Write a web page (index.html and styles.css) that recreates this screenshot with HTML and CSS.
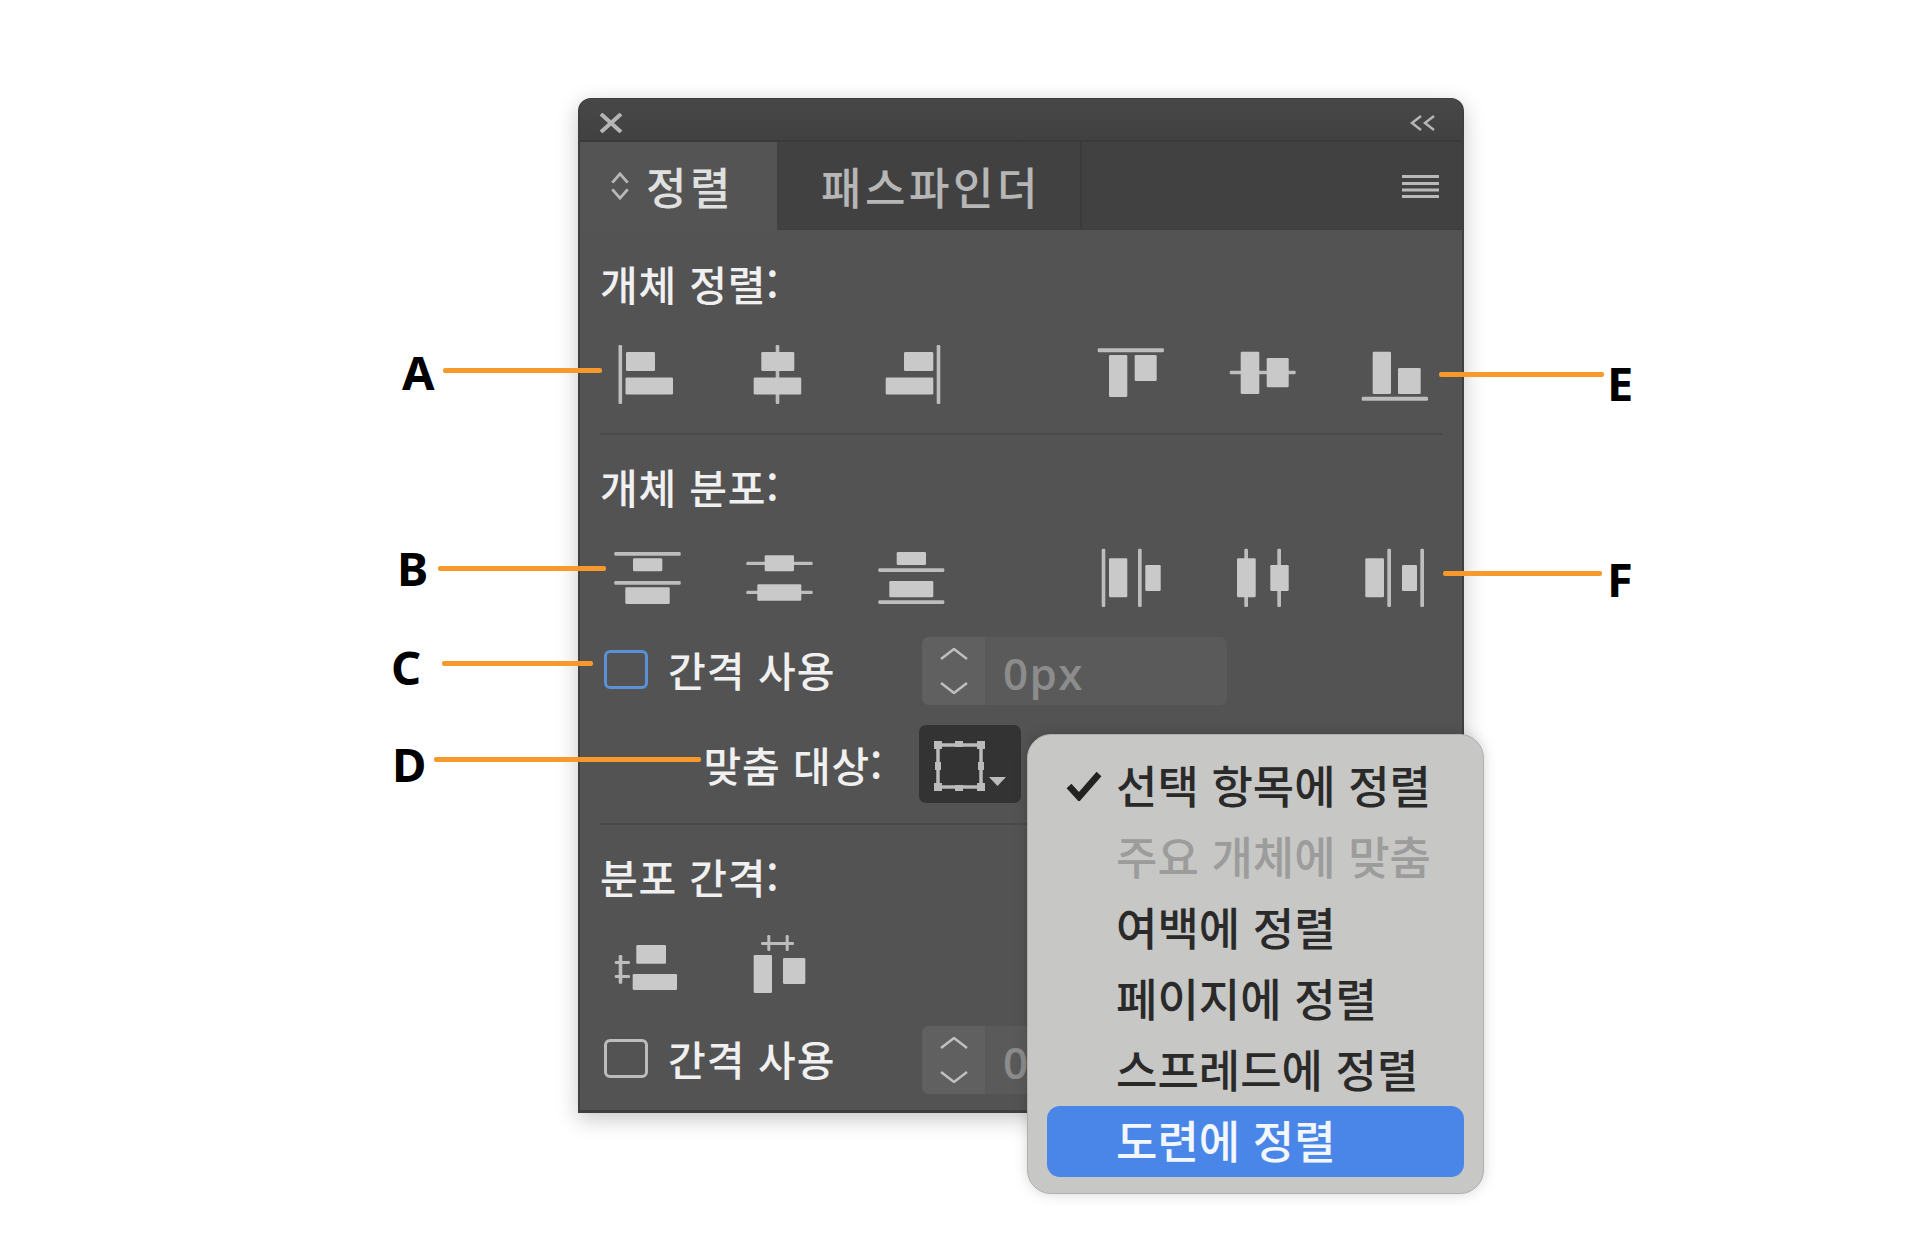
FILE: index.html
```html
<!DOCTYPE html>
<html lang="ko">
<head>
<meta charset="utf-8">
<title>정렬 패널</title>
<link rel="stylesheet" href="styles.css">
</head>
<body>
<div class="canvas">
  <section class="panel">
    <header class="titlebar">
      <svg class="ico-close" viewBox="0 0 24 20"><path d="M2 1 22 19M22 1 2 19"/></svg>
      <svg class="ico-collapse" viewBox="0 0 26 16"><path d="M11 1 2 8l9 7M24 1l-9 7 9 7"/></svg>
    </header>
    <nav class="tabs">
      <div class="tab active">
        <svg class="ico-updown" viewBox="0 0 20 26"><path d="M3 10 10 2l7 8M3 16l7 8 7-8"/></svg>
        <span>정렬</span>
      </div>
      <div class="tab second"><span>패스파인더</span></div>
      <svg class="ico-menu" viewBox="0 0 37 23"><path d="M0 1.5h37M0 8.5h37M0 15h37M0 21.5h37"/></svg>
    </nav>
    <div class="body">
      <h2 class="label first">개체 정렬:</h2>
      <div class="icons">
        <svg class="ic" viewBox="0 0 76 70"><rect class="b" x="8.5" y="6" width="3.6" height="59"/><rect x="16" y="13" width="29" height="19"/><rect x="15.5" y="38.5" width="47.5" height="17"/></svg>
        <svg class="ic" viewBox="0 0 76 70"><rect class="b" x="33.7" y="6" width="3.6" height="59"/><rect x="19.3" y="13" width="33" height="19"/><rect x="11.7" y="38.5" width="47.5" height="17"/></svg>
        <svg class="ic" viewBox="0 0 76 70"><rect class="b" x="62.7" y="6" width="3.6" height="59"/><rect x="30" y="13" width="29.3" height="19"/><rect x="11.7" y="38.5" width="47.6" height="17"/></svg>
        <svg class="ic group" viewBox="0 0 76 70"><rect class="b" x="1.7" y="9.3" width="66.3" height="4"/><rect x="13" y="16" width="18.3" height="42"/><rect x="38.7" y="16" width="22" height="26"/></svg>
        <svg class="ic" viewBox="0 0 76 70"><rect class="b" x="1.7" y="31.7" width="66" height="3.6"/><rect x="12.7" y="12.7" width="18.6" height="42.3"/><rect x="38.7" y="19" width="22" height="29.3"/></svg>
        <svg class="ic" viewBox="0 0 76 70"><rect x="12.7" y="12.7" width="18.3" height="42.3"/><rect x="38" y="29" width="22.7" height="26"/><rect class="b" x="1.7" y="57.7" width="66.3" height="4"/></svg>
      </div>
      <hr class="divider d1">
      <h2 class="label">개체 분포:</h2>
      <div class="icons r2">
        <svg class="ic" viewBox="0 0 76 70"><rect class="b" x="4.3" y="8" width="66.4" height="3.7"/><rect x="23" y="14.3" width="29.3" height="13"/><rect class="b" x="4.3" y="37" width="66.4" height="3.7"/><rect x="15.3" y="43.3" width="44.4" height="16.7"/></svg>
        <svg class="ic" viewBox="0 0 76 70"><rect class="b" x="4.3" y="17.7" width="66.4" height="3.4"/><rect x="22.7" y="11.3" width="29.3" height="16"/><rect class="b" x="4.3" y="46.7" width="66.4" height="3.4"/><rect x="15.3" y="40.3" width="44" height="16.4"/></svg>
        <svg class="ic" viewBox="0 0 76 70"><rect x="22.7" y="8" width="29.3" height="13"/><rect class="b" x="4.3" y="24.3" width="66" height="3.6"/><rect x="15.3" y="37" width="44" height="16.3"/><rect class="b" x="4.3" y="56.3" width="66" height="3.6"/></svg>
        <svg class="ic group" viewBox="0 0 76 70"><rect class="b" x="5.7" y="4.7" width="3.6" height="58.3"/><rect x="13" y="14.3" width="18.3" height="39"/><rect class="b" x="42" y="4.7" width="3.7" height="58.3"/><rect x="49.3" y="21" width="15.4" height="26"/></svg>
        <svg class="ic" viewBox="0 0 76 70"><rect class="b" x="16.3" y="4.7" width="3.7" height="58.3"/><rect x="9" y="14.3" width="18.7" height="39"/><rect class="b" x="49.3" y="4.7" width="3.7" height="58.3"/><rect x="42.3" y="21" width="18.4" height="26"/></svg>
        <svg class="ic" viewBox="0 0 76 70"><rect x="5.3" y="14.3" width="18.7" height="39"/><rect class="b" x="27.3" y="4.7" width="3.7" height="58.3"/><rect x="42" y="21" width="15" height="26"/><rect class="b" x="60.3" y="4.7" width="3.7" height="58.3"/></svg>
      </div>
      <div class="gap-row r-a">
        <span class="check blue"></span>
        <span class="gap-text">간격 사용</span>
        <div class="field">
          <span class="spin"><svg viewBox="0 0 28 46"><path d="M1 11 14 1l13 10M1 35l13 10 13-10"/></svg></span>
          <span class="value">0px</span>
        </div>
      </div>
      <div class="align-row">
        <span class="align-text">맞춤 대상:</span>
        <div class="select">
          <svg viewBox="0 0 102 78">
            <rect class="frame" x="19" y="20" width="43" height="42"/>
            <path class="handles" d="M15 16h8v8h-8zM58 16h8v8h-8zM15 58h8v8h-8zM58 58h8v8h-8zM36 16h8v6h-8zM36 60h8v6h-8zM16 37h6v8h-6zM59 37h6v8h-6z"/>
            <path class="handles" d="M70 52h17l-8.500 9z"/>
          </svg>
        </div>
      </div>
      <hr class="divider d2">
      <h2 class="label l3">분포 간격:</h2>
      <div class="icons r3">
        <svg class="ic" viewBox="0 0 76 70"><rect class="b" x="8.700" y="24" width="3.6" height="28.7"/><rect class="b" x="4.7" y="30" width="15.3" height="3"/><rect class="b" x="4.7" y="44" width="15.3" height="3"/><rect x="26.3" y="14" width="29.7" height="18.700"/><rect x="22.7" y="43" width="44.3" height="16"/></svg>
        <svg class="ic" viewBox="0 0 76 70"><rect class="b" x="19" y="11" width="33" height="3"/><rect class="b" x="25.3" y="4" width="3" height="16"/><rect class="b" x="43.7" y="4" width="3" height="16"/><rect x="11.7" y="24" width="18.3" height="38"/><rect x="41" y="27" width="22.3" height="26"/></svg>
      </div>
      <div class="gap-row r-b">
        <span class="check"></span>
        <span class="gap-text">간격 사용</span>
        <div class="field">
          <span class="spin"><svg viewBox="0 0 28 46"><path d="M1 11 14 1l13 10M1 35l13 10 13-10"/></svg></span>
          <span class="value">0px</span>
        </div>
      </div>
    </div>
  </section>

  <ul class="menu">
    <li class="item"><svg class="tick" viewBox="0 0 36 30"><path d="M3 15l10 11L33 3"/></svg>선택 항목에 정렬</li>
    <li class="item disabled">주요 개체에 맞춤</li>
    <li class="item">여백에 정렬</li>
    <li class="item">페이지에 정렬</li>
    <li class="item">스프레드에 정렬</li>
    <li class="item selected">도련에 정렬</li>
  </ul>

  <i class="lead la"></i><b class="tag ta">A</b>
  <i class="lead lb"></i><b class="tag tb">B</b>
  <i class="lead lc"></i><b class="tag tc">C</b>
  <i class="lead ld"></i><b class="tag td">D</b>
  <i class="lead le"></i><b class="tag te">E</b>
  <i class="lead lf"></i><b class="tag tf">F</b>
</div>
</body>
</html>
```
FILE: styles.css
```css
* { box-sizing: border-box; }
html, body { margin: 0; padding: 0; background: #fff; }
body { font-family: "Noto Sans CJK KR", "Noto Sans", sans-serif; overflow: hidden; }
.canvas { position: relative; width: 1920px; height: 1240px; padding: 98px 0 0 578px; }

.panel {
  width: 886px; height: 1015px; background: #535353;
  border: solid #3f3f3f; border-width: 1px 2px 3px 2px;
  border-radius: 13px 13px 0 0;
  box-shadow: 0 6px 22px rgba(0,0,0,.22);
  overflow: hidden;
}
.titlebar {
  height: 43px; display: flex; align-items: center; justify-content: space-between;
  padding: 6px 26px 0 19px;
  background: linear-gradient(#474747, #414141);
  border-bottom: 2px solid #3a3a3a;
}
.titlebar svg { fill: none; stroke: #b5b5b5; }
.ico-close { width: 24px; height: 20px; stroke-width: 4; }
.ico-collapse { width: 26px; height: 16px; stroke-width: 2.500; }
.tabs { position: relative; height: 88px; display: flex; background: #414141; border-bottom: 1px solid #3d3d3d; }
.tab { height: 88px; display: flex; align-items: center; font-size: 44px; font-weight: 500; letter-spacing: 3.500px; color: #b6b6b6; }
.tab.active { width: 197px; background: #545454; color: #e0e0e0; padding-left: 29px; gap: 15px; }
.tab.second { width: 305px; padding-left: 44px; border-right: 2px solid #3b3b3b; }
.ico-updown { width: 22px; height: 30px; fill: none; stroke: #b9b9b9; stroke-width: 2.500; }
.ico-menu { position: absolute; right: 23px; top: 33px; width: 37px; height: 23px; stroke: #b9b9b9; stroke-width: 3; fill: none; }

.body { padding: 0 20px; }
.label { margin: 0; height: 50px; line-height: 48px; font-size: 41px; font-weight: 500; letter-spacing: .8px; color: #f0f0f0; }
.label.first { margin-top: 29px; }
.label.l3 { margin-top: 27px; }
.icons { display: flex; gap: 56px; margin: 30px 0 0 10px; height: 70px; }
.ic { width: 76px; height: 70px; flex: none; fill: #c9c9c9; }
.ic rect { rx: 1.200px; }
.ic .b { fill: #bdbdbd; }
.ic.group { margin-left: 90px; }
.icons.r2 { margin-top: 32px; }
.icons.r3 { margin-top: 29px; }

.divider { margin: 0; border: 0; height: 2px; background: #4a4a4a; }
.divider.d1 { margin: 24px 0 27px 0; }
.divider.d2 { margin: 20px 0 0 0; }

.gap-row { display: grid; grid-template-columns: 48px 274px 305px; align-items: center; height: 68px; }
.gap-row.r-a { margin-top: 23px; }
.gap-row.r-b { margin-top: 25px; }
.check { width: 44px; height: 39px; margin: 0 0 4px 4px; border: 3px solid #bcbcbc; border-radius: 6px; }
.check.blue { border-color: #5a90d6; }
.gap-text { padding-left: 20px; font-size: 41px; font-weight: 500; letter-spacing: 1px; line-height: 62px; height: 66px; color: #f0f0f0; }
.field { display: flex; height: 68px; border-radius: 7px; overflow: hidden; background: #5a5a5a; }
.spin { width: 63px; background: #606060; display: flex; align-items: center; justify-content: center; }
.spin svg { width: 28px; height: 46px; fill: none; stroke: #bfbfbf; stroke-width: 2.500; }
.value { padding-left: 18px; font-family: "Open Sans", sans-serif; font-size: 44px; font-weight: 600; letter-spacing: 1.300px; line-height: 72px; color: #8c8c8c; }

.align-row { display: grid; grid-template-columns: 319px 102px; align-items: center; height: 78px; margin-top: 20px; }
.align-text { text-align: right; padding-right: 36px; font-size: 41px; font-weight: 500; letter-spacing: .8px; color: #f0f0f0; white-space: nowrap; }
.select { height: 78px; border-radius: 7px; background: #333; }
.select svg { display: block; width: 102px; height: 78px; }
.frame { fill: none; stroke: #bbb; stroke-width: 3.500; }
.handles { fill: #bbb; }

.menu {
  position: absolute; left: 1027px; top: 734px; width: 457px; height: 460px; margin: 0;
  padding: 16px 19px 17px; list-style: none;
  background: #c7c7c5; border-radius: 24px;
  border: 1px solid #b0b0ae;
  box-shadow: 0 0 14px rgba(0,0,0,.16);
}
.item { position: relative; height: 71px; line-height: 67px; padding-left: 69px; font-size: 45px; font-weight: 500; letter-spacing: 0; color: #2a2a2a; white-space: nowrap; }
.item.disabled { color: #9c9c9c; }
.item.selected { background: #4a86e8; color: #f2f6fd; border-radius: 13px; }
.tick { position: absolute; left: 19px; top: 20px; width: 36px; height: 30px; fill: none; stroke: #222; stroke-width: 6.500; }

.lead { position: absolute; height: 5px; background: #f79a2b; border-radius: 2px; }
.la { left: 443px; width: 159px; top: 368px; }
.lb { left: 438px; width: 168px; top: 566px; }
.lc { left: 442px; width: 151px; top: 661px; }
.ld { left: 434px; width: 267px; top: 757px; }
.le { left: 1439px; width: 165px; top: 372px; }
.lf { left: 1443px; width: 159px; top: 571px; }

.tag { position: absolute; font-family: "Noto Sans", sans-serif; font-weight: 700; font-size: 47px; line-height: 60px; color: #000; }
.ta { left: 402px; top: 342px; }
.tb { left: 397px; top: 538px; }
.tc { left: 391px; top: 637px; }
.td { left: 392px; top: 734px; }
.te { left: 1607px; top: 353px; }
.tf { left: 1607px; top: 549px; }
```
